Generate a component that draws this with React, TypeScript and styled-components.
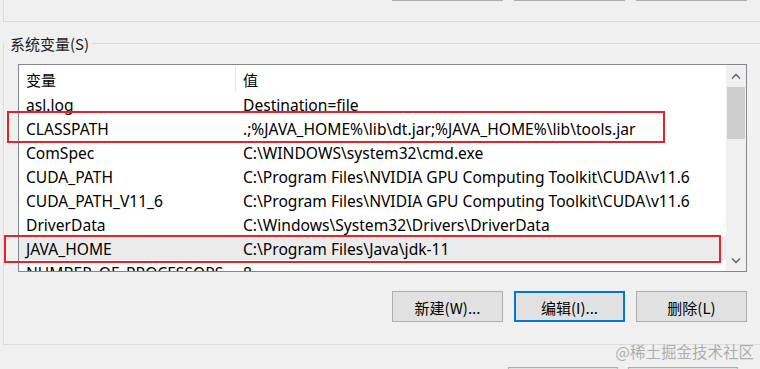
import * as React from 'react'
import styled, { createGlobalStyle } from 'styled-components'

interface EnvVar {
  name: string;
  value: string;
  selected?: boolean;
}

const vars: EnvVar[] = [
  { name: 'asl.log', value: 'Destination=file' },
  { name: 'CLASSPATH', value: '.;%JAVA_HOME%\\lib\\dt.jar;%JAVA_HOME%\\lib\\tools.jar' },
  { name: 'ComSpec', value: 'C:\\WINDOWS\\system32\\cmd.exe' },
  { name: 'CUDA_PATH', value: 'C:\\Program Files\\NVIDIA GPU Computing Toolkit\\CUDA\\v11.6' },
  { name: 'CUDA_PATH_V11_6', value: 'C:\\Program Files\\NVIDIA GPU Computing Toolkit\\CUDA\\v11.6' },
  { name: 'DriverData', value: 'C:\\Windows\\System32\\Drivers\\DriverData' },
  { name: 'JAVA_HOME', value: 'C:\\Program Files\\Java\\jdk-11', selected: true },
  { name: 'NUMBER_OF_PROCESSORS', value: '8' },
]

const GlobalStyle = createGlobalStyle`
  html, body {
    margin: 0;
    padding: 0;
    background: #f0f0f0;
  }
  body {
    font-family: "Noto Sans", "Noto Sans CJK SC", sans-serif;
    font-size: 15px;
    color: #000;
  }
`

const Page = styled.div`
  position: relative;
  width: 760px;
  height: 369px;
  overflow: hidden;
  background: #f0f0f0;
`

// bottom of the group above, only its edge is in view
const UpperGroup = styled.div`
  display: flex;
  flex-direction: column;
  margin-left: 3px;
  height: 21px;
  border-left: 1px solid #dcdcdc;
  border-bottom: 1px solid #dcdcdc;
`

const ButtonRow = styled.div`
  display: flex;
  justify-content: flex-end;
  gap: 11px;
`

const TopButtons = styled(ButtonRow)`
  margin: -30px 13px 0 0;
`

const Button = styled.div<{ $focused?: boolean }>`
  width: 111px;
  height: 31px;
  box-sizing: border-box;
  display: flex;
  align-items: center;
  justify-content: center;
  padding-top: 1px;
  background: #e1e1e1;
  border: ${p => (p.$focused ? '2px solid #0078d7' : '1px solid #adadad')};
  font-family: "Noto Sans CJK SC", "Noto Sans", sans-serif;
  font-size: 15px;
  line-height: 1;
`

const SystemGroup = styled.div`
  display: flex;
  flex-direction: column;
  margin: 21px 0 0 3px;
  height: 301px;
  border-left: 1px solid #dcdcdc;
  border-bottom: 1px solid #dcdcdc;
  padding-right: 13px;
`

const GroupHead = styled.div`
  display: flex;
  align-items: center;
  height: 0;
  margin-right: -13px;
`

const GroupLabel = styled.span`
  padding: 0 3px 0 6px;
  font-family: "Noto Sans CJK SC", "Noto Sans", sans-serif;
  font-size: 15px;
  color: #1a1a1a;
  background: #f0f0f0;
  white-space: nowrap;
`

const GroupLine = styled.div`
  flex: 1;
  border-top: 1px solid #dcdcdc;
`

const ListBox = styled.div`
  margin: 21px 0 0 14px;
  height: 208px;
  box-sizing: border-box;
  border: 1px solid #828790;
  background: #fff;
  display: grid;
  grid-template-columns: 1fr 20px;
  overflow: hidden;
`

const ListBody = styled.div`
  overflow: hidden;
  font-size: 15.6px;
`

const Row = styled.div<{ $selected?: boolean; $header?: boolean }>`
  display: grid;
  grid-template-columns: 217px 1fr;
  height: ${p => (p.$header ? 27 : 24)}px;
  align-items: start;
  background: ${p => (p.$selected ? '#ebebeb' : 'transparent')};
  white-space: nowrap;
`

const Cell = styled.div`
  padding: 2px 0 0 7px;
  height: 100%;
  display: flex;
  align-items: center;
  box-sizing: border-box;
`

const HeadCell = styled(Cell)<{ $sep?: boolean }>`
  font-family: "Noto Sans CJK SC", "Noto Sans", sans-serif;
  font-size: 15px;
  height: 26px;
  margin-top: 1px;
  padding-top: 1px;
  border-right: ${p => (p.$sep ? '1px solid #e5e5e5' : 'none')};
`

const ScrollBar = styled.div`
  display: flex;
  flex-direction: column;
  background: #f0f0f0;
`

const Arrow = styled.div`
  height: 21px;
  display: flex;
  align-items: center;
  justify-content: center;
`

const Track = styled.div`
  flex: 1;
  padding-top: 1px;
`

const Thumb = styled.div`
  height: 52px;
  margin: 0 1px;
  background: #cdcdcd;
`

const ActionRow = styled(ButtonRow)`
  margin-top: 19px;
`

const DialogRow = styled.div`
  display: flex;
  gap: 10px;
  margin: 22px 0 0 508px;
`

const DialogButton = styled.div`
  width: 110px;
  height: 31px;
  box-sizing: border-box;
  background: #e1e1e1;
  border: 1px solid #adadad;
`

// red annotation frames drawn over the list
const Mark = styled.div<{ $left: number; $top: number; $w: number; $h: number }>`
  position: absolute;
  left: ${p => p.$left}px;
  top: ${p => p.$top}px;
  width: ${p => p.$w}px;
  height: ${p => p.$h}px;
  box-sizing: border-box;
  border: 2px solid #e8212a;
  pointer-events: none;
`

const Watermark = styled.div`
  position: absolute;
  right: 6px;
  bottom: 7px;
  font-family: "Noto Sans CJK SC", sans-serif;
  font-size: 15.5px;
  color: rgba(150, 150, 150, 0.75);
`

const Chevron = ({ up }: { up?: boolean }) => (
  <svg width="10" height="6" viewBox="0 0 10 6">
    <path
      d={up ? 'M1 5.5 L5 1.5 L9 5.5' : 'M1 0.5 L5 4.5 L9 0.5'}
      fill="none"
      stroke="#606060"
      strokeWidth="1.4"
    />
  </svg>
)

export default function App() {
  return (
    <Page>
      <GlobalStyle />
      <UpperGroup>
        <TopButtons>
          <Button />
          <Button />
          <Button />
        </TopButtons>
      </UpperGroup>

      <SystemGroup>
        <GroupHead>
          <GroupLabel>系统变量(S)</GroupLabel>
          <GroupLine />
        </GroupHead>

        <ListBox>
          <ListBody>
            <Row $header>
              <HeadCell $sep>变量</HeadCell>
              <HeadCell>值</HeadCell>
            </Row>
            {vars.map(v => (
              <Row key={v.name} $selected={v.selected}>
                <Cell>{v.name}</Cell>
                <Cell>{v.value}</Cell>
              </Row>
            ))}
          </ListBody>
          <ScrollBar>
            <Arrow><Chevron up /></Arrow>
            <Track><Thumb /></Track>
            <Arrow><Chevron /></Arrow>
          </ScrollBar>
        </ListBox>

        <ActionRow>
          <Button>新建(W)...</Button>
          <Button $focused>编辑(I)...</Button>
          <Button>删除(L)</Button>
        </ActionRow>
      </SystemGroup>

      <DialogRow>
        <DialogButton />
        <DialogButton />
      </DialogRow>

      <Mark $left={7} $top={111} $w={658} $h={32} />
      <Mark $left={4} $top={235} $w={717} $h={28} />
      <Watermark>@稀土掘金技术社区</Watermark>
    </Page>
  )
}
